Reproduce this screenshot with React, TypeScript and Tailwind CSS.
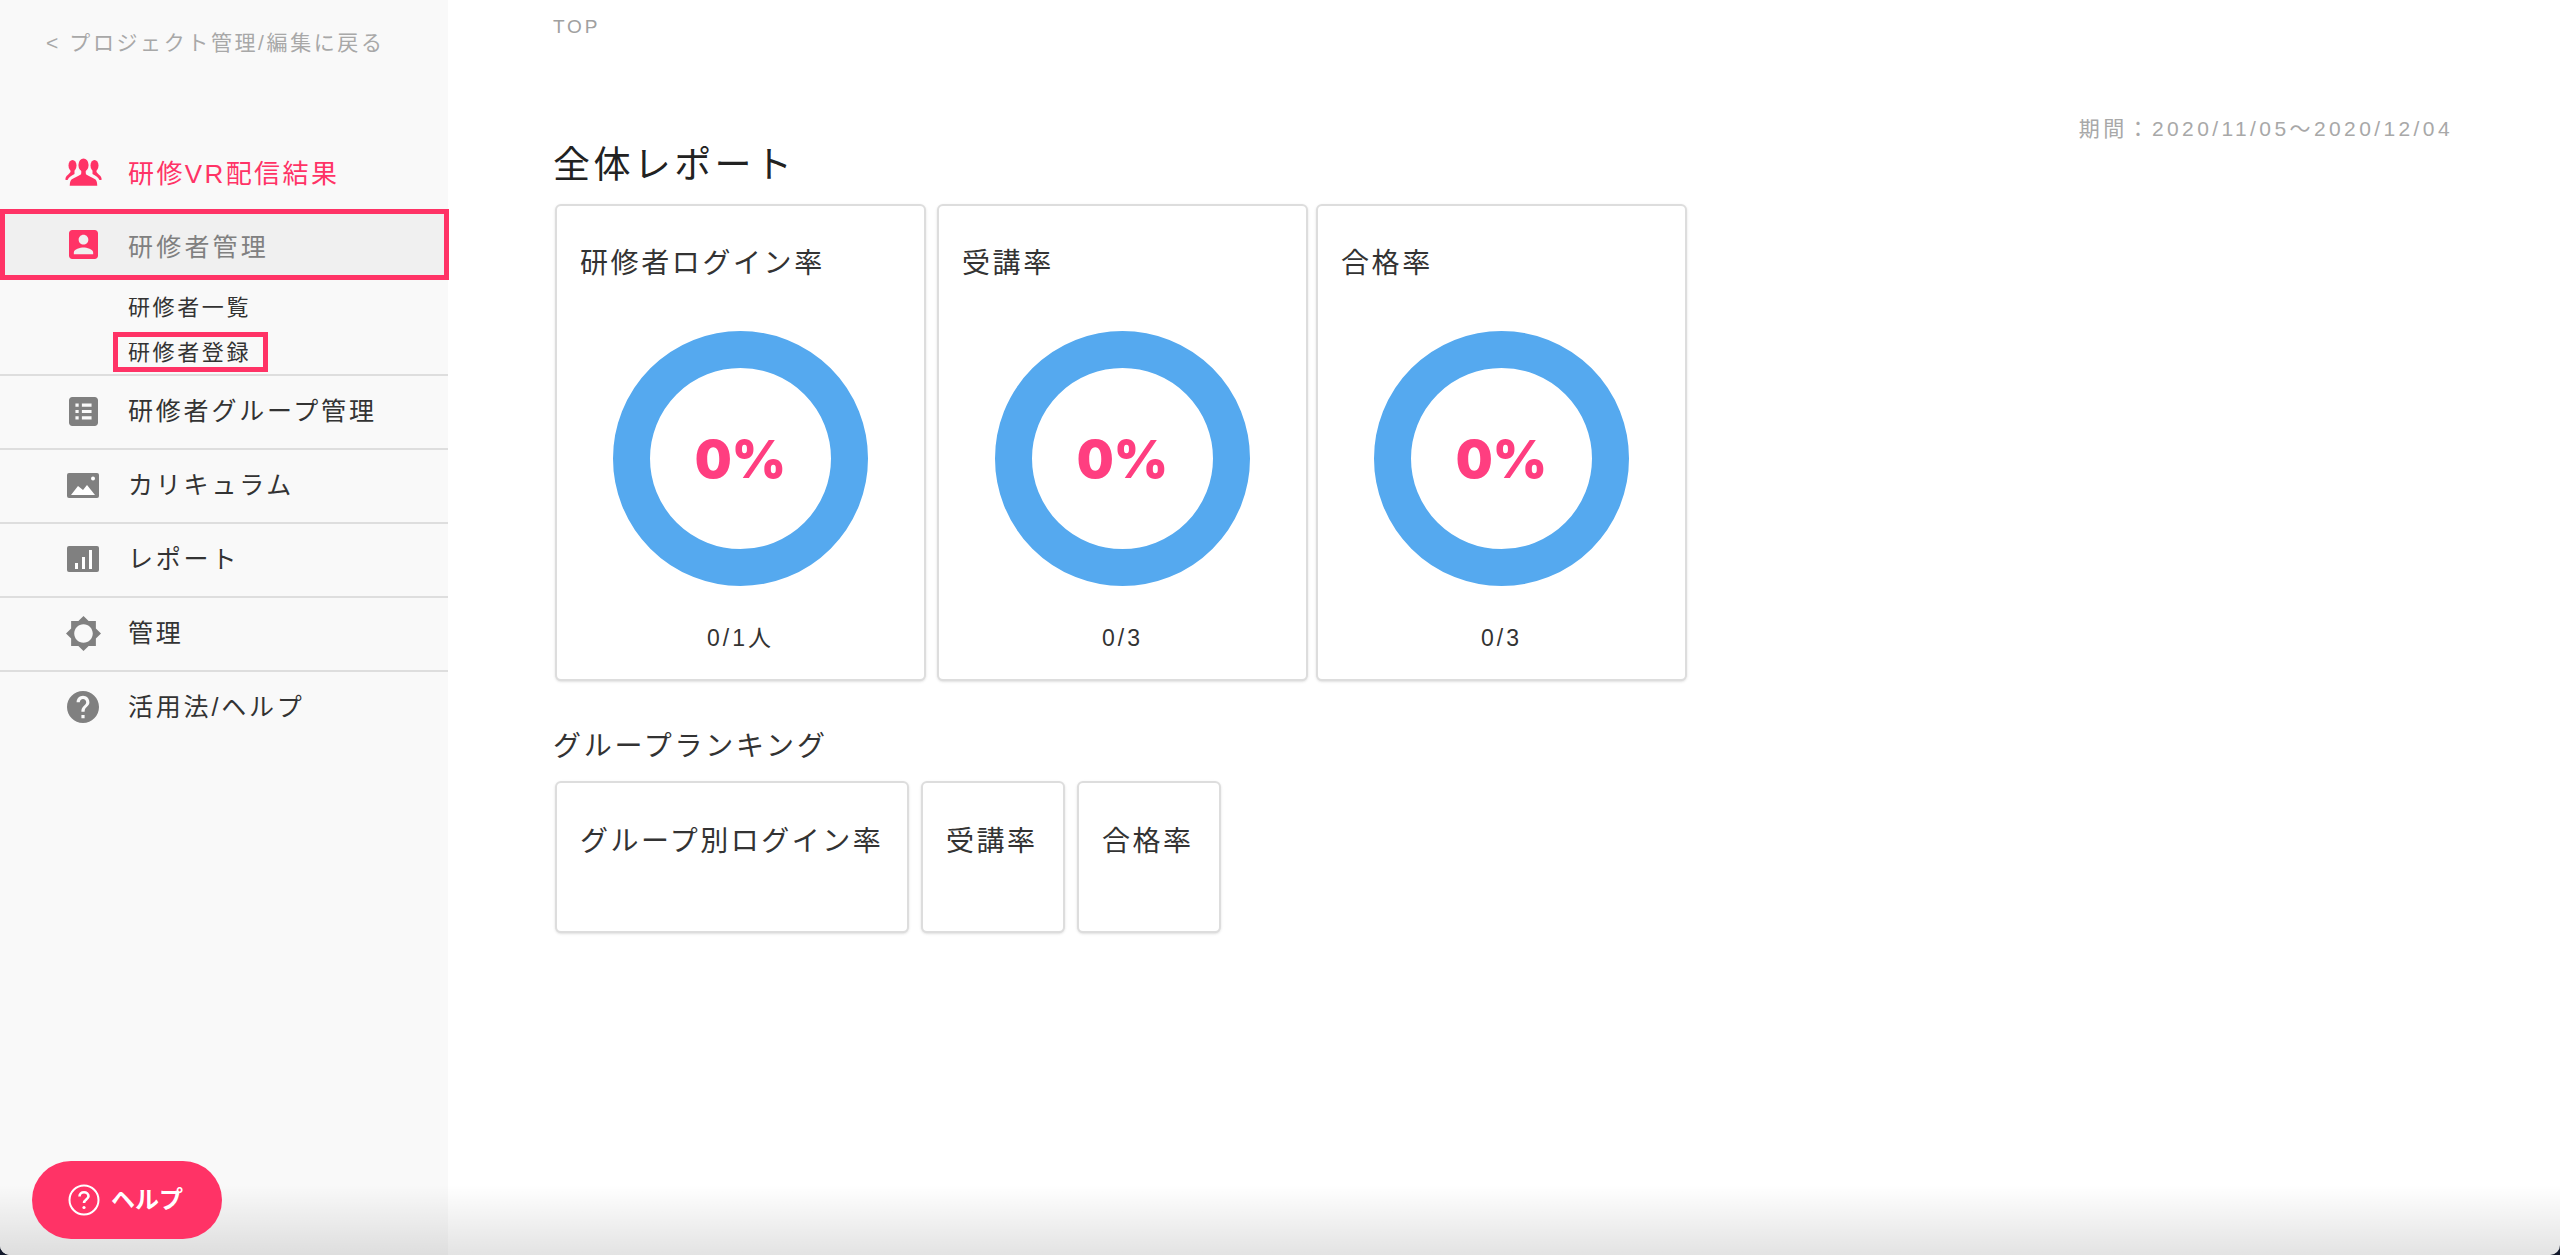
import React from 'react';

const jp = '[font-family:"Liberation_Sans","Noto_Sans_CJK_JP",sans-serif]';

function PeopleIcon() {
    return (
        <svg viewBox="0 0 36 28" className="w-[37px] h-[28px]">
            <g fill="#ff3366">
                <ellipse cx="7" cy="7.5" rx="4" ry="5.5" />
                <path d="M5 12v2c-1 2-4 3-5 6v2h2c1.5-3 4-4.5 7-6v-4z" />
                <ellipse cx="29" cy="7.5" rx="4" ry="5.5" />
                <path d="M31 12v2c1 2 4 3 5 6v2h-2c-1.5-3-4-4.5-7-6v-4z" />
            </g>
            <g fill="#ff3366" stroke="#f9f9f9" strokeWidth="1.4">
                <path d="M15.5 11v4c-.5 2-6.5 3-10 6-1 1-2 4-2 7.5h29c0-3.5-1-6.5-2-7.5-3.5-3-9.5-4-10-6v-4z" />
                <ellipse cx="18" cy="7" rx="5.8" ry="7.3" />
            </g>
            <rect x="15.8" y="11" width="4.4" height="5" fill="#ff3366" />
        </svg>
    );
}

function AccountIcon() {
    return (
        <svg viewBox="3 3 18 18" className="w-[29px] h-[29px] fill-[#ff3366]">
            <path d="M3 5v14c0 1.1.89 2 2 2h14c1.1 0 2-.9 2-2V5c0-1.1-.9-2-2-2H5c-1.11 0-2 .9-2 2zm12 4c0 1.66-1.34 3-3 3s-3-1.34-3-3 1.34-3 3-3 3 1.34 3 3zm-9 8c0-2 4-3.1 6-3.1s6 1.1 6 3.1v1H6v-1z" />
        </svg>
    );
}

function ListIcon() {
    return (
        <svg viewBox="3 3 18 18" className="w-[29px] h-[29px] fill-[#808080]">
            <path fillRule="evenodd" d="M5 3h14c1.1 0 2 .9 2 2v14c0 1.1-.9 2-2 2H5c-1.1 0-2-.9-2-2V5c0-1.1.9-2 2-2zm2 4v2h2V7zm4 0v2h6V7zm-4 4v2h2v-2zm4 0v2h6v-2zm-4 4v2h2v-2zm4 0v2h6v-2z" />
        </svg>
    );
}

function ImageIcon() {
    return (
        <svg viewBox="0 0 32 25" className="w-8 h-[25px]">
            <rect width="32" height="25" rx="2" fill="#808080" />
            <circle cx="26" cy="5.5" r="2" fill="#fff" />
            <path d="M4 22l7-9 5 4 4-5 8 10z" fill="#fff" />
        </svg>
    );
}

function ChartIcon() {
    return (
        <svg viewBox="0 0 32 26" className="w-8 h-[26px]">
            <rect width="32" height="26" rx="2" fill="#808080" />
            <path d="M8 17h3v6H8zM15 11h3v12h-3zM22 4h3v19h-3z" fill="#fff" />
        </svg>
    );
}

function GearIcon() {
    return (
        <svg viewBox="0.69 0.69 22.62 22.62" className="w-[35px] h-[35px] fill-[#808080]">
            <path d="M20 15.31L23.31 12 20 8.69V4h-4.69L12 .69 8.69 4H4v4.69L.69 12 4 15.31V20h4.69L12 23.31 15.31 20H20v-4.69zM12 18c-3.31 0-6-2.69-6-6s2.69-6 6-6 6 2.69 6 6-2.69 6-6 6z" />
        </svg>
    );
}

function HelpIcon() {
    return (
        <svg viewBox="2 2 20 20" className="w-8 h-8 fill-[#808080]">
            <path d="M12 2C6.48 2 2 6.48 2 12s4.48 10 10 10 10-4.48 10-10S17.52 2 12 2zm1 17h-2v-2h2v2zm2.07-7.75l-.9.92C13.45 12.9 13 13.5 13 15h-2v-.5c0-1.1.45-2.1 1.17-2.83l1.24-1.26c.37-.36.59-.86.59-1.41 0-1.1-.9-2-2-2s-2 .9-2 2H8c0-2.21 1.79-4 4-4s4 1.79 4 4c0 .88-.36 1.68-.93 2.25z" />
        </svg>
    );
}

function MenuRow({ icon, label }: { icon: React.ReactNode, label: string }) {
    return (
        <div className="h-[74px] border-t-2 border-[#dedede] flex items-center text-[25px] tracking-[2.8px] text-[#333]">
            <div className="w-[128px] flex justify-center pl-[38px] shrink-0 pb-[2px]">{icon}</div>
            <span>{label}</span>
        </div>
    );
}

function RateCard({ title, count }: { title: string, count: string }) {
    return (
        <div className="w-[371px] h-[477px] bg-white rounded-md border-2 border-[#dddddd] shadow-sm px-[23px] pt-[36px] flex flex-col">
            <div className="text-[28px] tracking-[2.6px] text-[#333] leading-[44px] whitespace-nowrap">{title}</div>
            <div className="mt-[45px] flex justify-center">
                <div className="w-[255px] h-[255px] rounded-full border-[37px] border-[#55a9ef] flex items-center justify-center">
                    <span className="pt-[3px] text-[52px] font-black text-[#ff3e80] [font-family:Inter,sans-serif]">0%</span>
                </div>
            </div>
            <div className="mt-[35px] text-center text-[23px] tracking-[3px] text-[#333]">{count}</div>
        </div>
    );
}

function RankCard({ title, width }: { title: string, width: string }) {
    return (
        <div className={`${width} h-[152px] bg-white rounded-md border-2 border-[#dddddd] shadow-sm pl-[23px] pt-[37px] text-[28px] tracking-[2.5px] leading-[44px] text-[#333] whitespace-nowrap`}>
            {title}
        </div>
    );
}

export default function App() {
    return (
        <div className="h-[1255px] w-[2560px] bg-[#141a2c]">
            <div className={`relative flex h-full w-full overflow-hidden rounded-b-[10px] bg-white ${jp}`}>
                <aside className="w-[448px] shrink-0 bg-[#f9f9f9] flex flex-col">
                    <div className="h-[137px] pl-[46px] pt-[27px] text-[21px] tracking-[2.6px] text-[#a8a8a8] leading-[32px]">
                        &lt; プロジェクト管理/編集に戻る
                    </div>
                    <div className="h-[72px] flex items-center text-[26px] tracking-[2.4px] text-[#ff3366]">
                        <div className="w-[128px] flex justify-center pl-[38px] shrink-0 pb-[2px]"><PeopleIcon /></div>
                        <span className="pt-[2px]">研修VR配信結果</span>
                    </div>
                    <div className="h-[71px] w-[449px] border-[5px] border-[#ff3366] bg-[#f0f0f0] flex items-center text-[25px] tracking-[3.2px] text-[#808080]">
                        <div className="w-[123px] flex justify-center pl-[33px] shrink-0"><AccountIcon /></div>
                        <span className="pt-[7px]">研修者管理</span>
                    </div>
                    <div className="h-[94px] pl-[128px] text-[22px] tracking-[2.6px] text-[#333] flex flex-col">
                        <div className="h-[52px] pt-[13px] leading-[30px]">研修者一覧</div>
                        <div className="w-[155px] h-[40px] -ml-[15px] border-[5px] border-[#ff3366] pl-[10px] leading-[31px]">研修者登録</div>
                    </div>
                    <MenuRow icon={<ListIcon />} label="研修者グループ管理" />
                    <MenuRow icon={<ImageIcon />} label="カリキュラム" />
                    <MenuRow icon={<ChartIcon />} label="レポート" />
                    <MenuRow icon={<GearIcon />} label="管理" />
                    <MenuRow icon={<HelpIcon />} label="活用法/ヘルプ" />
                    <div className="relative z-10 mt-auto mb-[16px] ml-[32px] w-[190px] h-[78px] rounded-full bg-[#ff3366] flex items-center pl-[36px] gap-[11px] text-white text-[24px] font-bold">
                        <svg viewBox="0 0 32 32" className="w-8 h-8 fill-none stroke-white stroke-2">
                            <circle cx="16" cy="16" r="14.5" />
                            <path d="M11.5 12.5c0-2.5 2-4.2 4.5-4.2s4.5 1.7 4.5 4c0 3.2-4.5 3.4-4.5 6.7" strokeWidth="2.6" />
                            <circle cx="16" cy="23.5" r="1.6" fill="#fff" stroke="none" />
                        </svg>
                        <span>ヘルプ</span>
                    </div>
                </aside>

                <main className="flex-1 pl-[105px] pr-[107px] min-w-0">
                    <div className="pt-[15px] text-[19px] tracking-[2.8px] leading-[24px] text-[#a0a0a0]">TOP</div>
                    <div className="mt-[77px] text-right text-[21px] tracking-[3.4px] leading-[26px] text-[#a8a8a8]">期間：2020/11/05〜2020/12/04</div>
                    <h1 className="mt-[-3px] text-[37px] tracking-[3.4px] leading-[54px] text-[#222]">全体レポート</h1>
                    <div className="mt-[11px] ml-[2px] flex gap-[11px]">
                        <RateCard title="研修者ログイン率" count="0/1人" />
                        <RateCard title="受講率" count="0/3" />
                        <div className="-ml-[3px]">
                            <RateCard title="合格率" count="0/3" />
                        </div>
                    </div>
                    <h2 className="mt-[44px] text-[28px] tracking-[2.8px] leading-[44px] text-[#333]">グループランキング</h2>
                    <div className="mt-[12px] ml-[2px] flex gap-[12px]">
                        <RankCard title="グループ別ログイン率" width="w-[354px]" />
                        <RankCard title="受講率" width="w-[144px]" />
                        <RankCard title="合格率" width="w-[144px]" />
                    </div>
                </main>

                <div className="absolute inset-x-0 bottom-0 h-[70px] pointer-events-none bg-gradient-to-b from-transparent to-[#0000001c]" />
            </div>
        </div>
    );
}
